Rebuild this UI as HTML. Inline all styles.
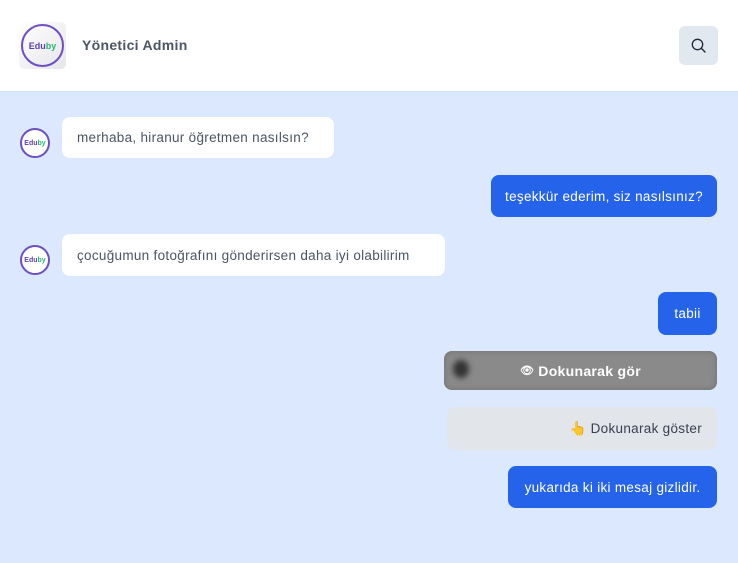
<!DOCTYPE html>
<html><head><meta charset="utf-8"><style>
*{box-sizing:border-box;margin:0;padding:0}
body{width:738px;height:563px;overflow:hidden;background:#dbe8fd;font-family:"Liberation Sans",sans-serif;font-size:13.5px;position:relative}
.hdr{position:absolute;left:0;top:0;width:738px;height:92px;background:#fff;border-bottom:1px solid #d5e0ef}
.abs{position:absolute}
.b{position:absolute;border-radius:8px;display:flex;align-items:center;padding:0 15px;white-space:nowrap;letter-spacing:0.3px}
.in{background:#fff;color:#4b5563}
.out{background:#2563eb;color:#fff;justify-content:center;padding:0}
.av{position:absolute;width:30px;height:30px;border-radius:50%;border:2px solid #6d4fc2;background:#fff;font-size:7px;font-weight:bold;color:#5b3fb0;display:flex;align-items:center;justify-content:center;letter-spacing:0}
.av span{color:#2bb673}
</style></head><body>
<div class="hdr">
 <div class="abs" style="left:19px;top:22px;width:47px;height:47px;border-radius:5px;background:linear-gradient(135deg,#fff,#e6e6ea)">
  <div style="position:absolute;left:2px;top:2px;width:43px;height:43px;border-radius:50%;border:2px solid #6d4fc2;display:flex;align-items:center;justify-content:center;font-size:9px;font-weight:bold;color:#5b3fb0">Edu<span style="color:#2bb673">by</span></div>
 </div>
 <div class="abs" style="left:82px;top:37px;font-size:14px;font-weight:bold;color:#4b5563;letter-spacing:0.3px">Yönetici Admin</div>
 <div class="abs" style="left:679px;top:26px;width:39px;height:39px;border-radius:6px;background:#e2e8f0">
  <svg width="39" height="39" viewBox="0 0 39 39"><circle cx="18.5" cy="18.5" r="5.2" fill="none" stroke="#1f2937" stroke-width="1.3"/><line x1="22.3" y1="22.3" x2="26" y2="26" stroke="#1f2937" stroke-width="1.4" stroke-linecap="round"/></svg>
 </div>
</div>
<div class="av" style="left:20px;top:128px">Edu<span>by</span></div>
<div class="b in" style="left:62px;top:117px;width:272px;height:41px">merhaba, hiranur öğretmen nasılsın?</div>
<div class="b out" style="left:491px;top:175px;width:226px;height:42px">teşekkür ederim, siz nasılsınız?</div>
<div class="av" style="left:20px;top:245px">Edu<span>by</span></div>
<div class="b in" style="left:62px;top:234px;width:383px;height:42px">çocuğumun fotoğrafını gönderirsen daha iyi olabilirim</div>
<div class="b out" style="left:658px;top:292px;width:59px;height:43px">tabii</div>
<div class="b" style="left:444px;top:351px;width:273px;height:39px;background:#8a8a8a;justify-content:center;color:#fff;font-weight:bold;font-size:14px;box-shadow:inset 0 0 6px #6f6f6f">
 <div style="position:absolute;left:9px;top:9px;width:16px;height:18px;border-radius:50%;background:#333;filter:blur(3px)"></div><span style="font-size:11px;margin-right:4px">👁</span>Dokunarak gör</div>
<div class="b" style="left:447px;top:407px;width:270px;height:43px;background:#e2e5ea;color:#374151;justify-content:flex-end">👆 Dokunarak göster</div>
<div class="b out" style="left:508px;top:466px;width:209px;height:42px">yukarıda ki iki mesaj gizlidir.</div>
</body></html>
